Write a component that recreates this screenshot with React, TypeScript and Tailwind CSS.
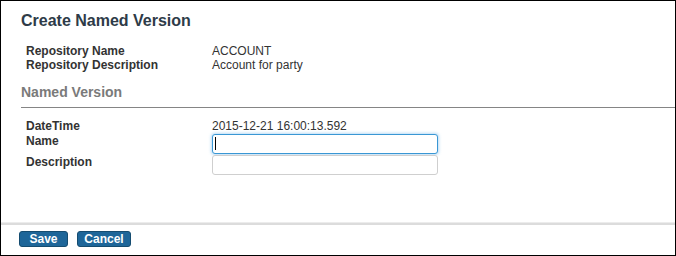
import React from 'react';

const font = { fontFamily: '"Liberation Sans", Arial, sans-serif' };

function Field({ focused }: { focused?: boolean }) {
  return (
    <div className="relative w-[226px] h-[20px]">
      <input
        type="text"
        readOnly
        className={
          focused
            ? 'w-full h-full rounded-[3px] border border-[#3a97d4] bg-white shadow-[0_0_3px_1px_rgba(102,175,233,0.45)] outline-none caret-transparent'
            : 'w-full h-full rounded-[3px] border border-[#cfcfcf] bg-white outline-none caret-transparent'
        }
      />
      {focused && <span className="absolute left-[3px] top-[3px] w-px h-[13px] bg-black" />}
    </div>
  );
}

export default function App() {
  return (
    <div
      className="w-[676px] h-[256px] border border-black bg-white flex flex-col text-[#333]"
      style={font}
    >
      <div className="flex-1 flex flex-col">
        <h1 className="pl-[20px] pt-[11px] text-[16px] leading-[18px] font-bold text-[#2e3b48]">
          Create Named Version
        </h1>

        <div className="mt-[14px] pl-[25px] grid grid-cols-[186px_auto] text-[12px] leading-[14px]">
          <span className="font-bold">Repository Name</span>
          <span>ACCOUNT</span>
          <span className="font-bold">Repository Description</span>
          <span>Account for party</span>
        </div>

        <h2 className="mt-[12px] pl-[20px] text-[14px] leading-[16px] font-bold text-[#7a7a7a]">
          Named Version
        </h2>
        <div className="mt-[7px] ml-[20px] h-px bg-[#858585]" />

        <div className="mt-[11px] pl-[25px] grid grid-cols-[186px_auto] gap-y-[1px] text-[12px] leading-[14px]">
          <span className="font-bold">DateTime</span>
          <span>2015-12-21 16:00:13.592</span>
          <span className="font-bold">Name</span>
          <Field focused />
          <span className="font-bold">Description</span>
          <Field />
        </div>
      </div>

      <div className="h-[33px] flex flex-col">
        <div className="h-[3px] border-t border-[#ececec] bg-[#dcdcdc]" />
        <div className="flex gap-[9px] pl-[18px] pt-[6px]">
          <button className="w-[49px] h-[16px] rounded-[3px] border border-[#154c70] bg-[#1e6699] text-white text-[12px] leading-[14px] font-bold">
            Save
          </button>
          <button className="w-[54px] h-[16px] rounded-[3px] border border-[#154c70] bg-[#1e6699] text-white text-[12px] leading-[14px] font-bold">
            Cancel
          </button>
        </div>
      </div>
    </div>
  );
}
